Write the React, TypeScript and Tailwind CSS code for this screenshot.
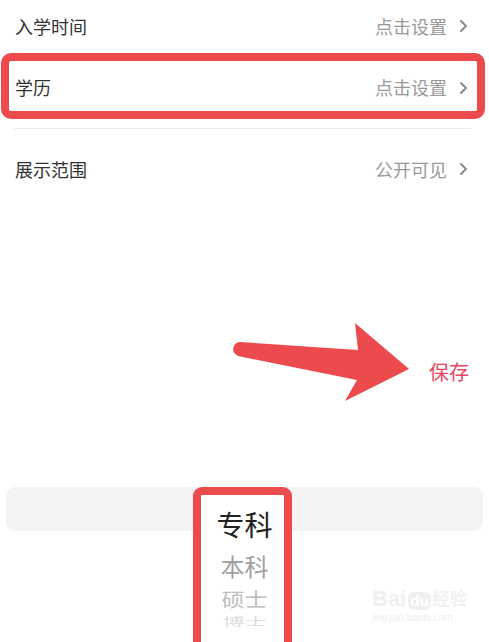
const font = { fontFamily: '"Noto Sans CJK SC", "Noto Sans", sans-serif' };

function Chevron() {
  return (
    <svg width="9" height="14" viewBox="0 0 9 14" className="ml-[12px]">
      <path d="M2 2l5 5-5 5" fill="none" stroke="#8a8a8a" strokeWidth="2" strokeLinecap="round" strokeLinejoin="round" />
    </svg>
  );
}

function Row({ label, value }: { label: string; value: string }) {
  return (
    <div className="flex items-center justify-between">
      <span className="text-[18px] text-[#333]">{label}</span>
      <span className="flex items-center text-[18px] text-[#999]">
        {value}
        <Chevron />
      </span>
    </div>
  );
}

export default function App() {
  return (
    <div className="relative h-[642px] w-[489px] overflow-hidden bg-white" style={font}>
      <div className="flex h-[52px] flex-col justify-center pl-[15px] pr-[21px]">
        <Row label="入学时间" value="点击设置" />
      </div>

      <div className="ml-[1px] mt-[1px] flex h-[66px] w-[484px] flex-col justify-center rounded-[10px] border-[8px] border-[#ec4a4c] pl-[6px] pr-[9px] pt-[3px]">
        <Row label="学历" value="点击设置" />
      </div>

      <div className="ml-[14px] mr-[18px] mt-[9px] h-px bg-[#ececec]" />

      <div className="flex h-[80px] flex-col justify-center pl-[15px] pr-[21px]">
        <Row label="展示范围" value="公开可见" />
      </div>

      <div className="mt-[151px] flex justify-end pr-[20px]">
        <span className="text-[20px] leading-[24px] text-[#e8475d]">保存</span>
      </div>

      <div className="relative mt-[103px] h-[180px]">
        <div className="mx-[6px] mt-[15px] h-[44px] rounded-[9px] bg-[#f3f3f3]" />
        <div className="absolute left-[193px] top-0 h-[200px] w-[99px] rounded-[9px] border-[8px] border-[#ec4a4c] bg-white" />
        <div className="absolute left-0 right-0 top-0 flex flex-col items-center">
          <span className="mt-[21px] text-[28px] leading-[32px] text-[#222]">专科</span>
          <span className="mt-[12px] text-[24px] leading-[28px] text-[#a0a0a0]">本科</span>
          <span className="mt-[5px] text-[23px] leading-[26px] text-[#bdbdbd] [transform:scaleY(0.85)]">硕士</span>
          <span className="-mt-[1px] text-[22px] leading-[22px] text-[#dcdcdc] [transform:scaleY(0.5)]">博士</span>
        </div>
      </div>

      <svg className="absolute left-0 top-0" width="489" height="642" viewBox="0 0 489 642">
        <path
          d="M240 342 L358 350 L355 323 L409 369 L345 401 L357 380 L238 356 Q231 352 234 346 Q236 342 240 342 Z"
          fill="#ec4a4c"
        />
      </svg>

      <div className="absolute left-[372px] top-[588px] flex flex-col items-start" style={{ fontFamily: '"Liberation Sans", "Noto Sans CJK SC", sans-serif' }}>
        <div className="flex items-end">
          <span className="text-[22px] font-bold leading-[22px] text-[#f0f0f0]">Bai</span>
          <span className="ml-[2px] rounded-[6px] bg-[#f0f0f0] px-[2px] text-[15px] font-bold leading-[18px] text-white">du</span>
          <span className="ml-[2px] text-[17px] font-bold leading-[20px] text-[#f0f0f0]">经验</span>
        </div>
        <span className="mt-[2px] text-[10px] leading-[12px] text-[#f0f0f0]">jingyan.baidu.com</span>
      </div>
    </div>
  );
}
